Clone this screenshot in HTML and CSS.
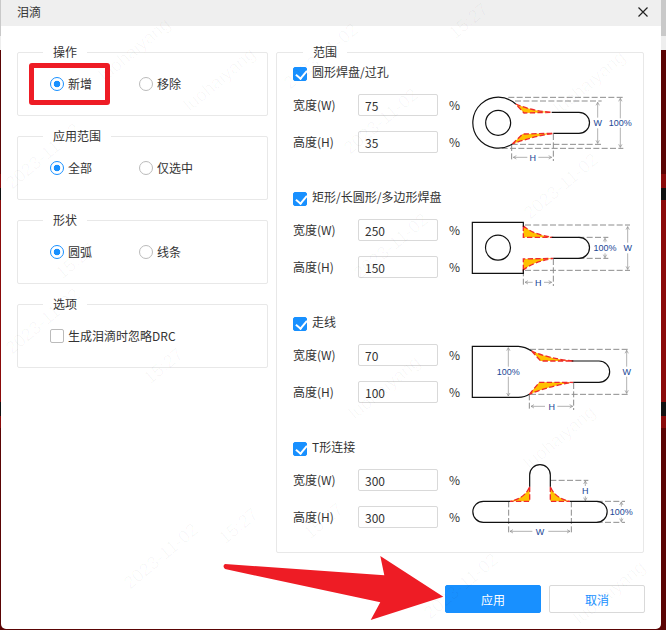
FILE: index.html
```html
<!DOCTYPE html>
<html>
<head>
<title>泪滴</title>
<link rel="stylesheet" href="styles.css">
</head>
<body>

<div class="dialog">
  <div class="title-bar">
    <span>泪滴</span>
    <svg class="close" width="10" height="10" viewBox="0 0 10 10"><path d="M0.5 0.5L9.5 9.5M9.5 0.5L0.5 9.5"/></svg>
  </div>

  <div class="main">
    <div class="left-col">
      <fieldset class="group">
        <legend>操作</legend>
        <div class="options">
          <label class="option"><input type="radio" name="action" checked>新增</label>
          <label class="option"><input type="radio" name="action">移除</label>
        </div>
      </fieldset>
      <fieldset class="group">
        <legend>应用范围</legend>
        <div class="options">
          <label class="option"><input type="radio" name="scope" checked>全部</label>
          <label class="option"><input type="radio" name="scope">仅选中</label>
        </div>
      </fieldset>
      <fieldset class="group">
        <legend>形状</legend>
        <div class="options">
          <label class="option"><input type="radio" name="shape" checked>圆弧</label>
          <label class="option"><input type="radio" name="shape">线条</label>
        </div>
      </fieldset>
      <fieldset class="group">
        <legend>选项</legend>
        <div class="options">
          <label class="option wide"><input type="checkbox">生成泪滴时忽略DRC</label>
        </div>
      </fieldset>
    </div>

    <fieldset class="range">
      <legend>范围</legend>

      <div class="section">
        <div class="fields">
          <label class="check-row"><input type="checkbox" checked>圆形焊盘/过孔</label>
          <div class="field"><span class="field-name">宽度(W)</span><input type="text" value="75"><span class="unit">%</span></div>
          <div class="field"><span class="field-name">高度(H)</span><input type="text" value="35"><span class="unit">%</span></div>
        </div>
        <svg class="diagram" width="170" height="85" viewBox="60 0 510 255">
          <defs>
            <marker id="head" markerUnits="userSpaceOnUse" markerWidth="16" markerHeight="16" refX="13" refY="8" orient="auto">
              <path d="M4 3L13 8L4 13" fill="none" stroke="#8c8c8c" stroke-width="2"/>
            </marker>
          </defs>
          <path class="dash" d="M175 37H520M155 190H520M195 48H455M185 178H455"/>
          <path class="dash" d="M185 180V228M310 147V228"/>
          <path class="dim" d="M443 98V52"/>
          <path class="dim" d="M443 130V175"/>
          <path class="dim" d="M511 100V40"/>
          <path class="dim" d="M511 128V187"/>
          <path class="dim" d="M232 217H190"/>
          <path class="dim" d="M265 217H305"/>
          <path class="drop" d="M197 57Q245 78 305 82L222 84Z"/>
          <path class="drop" d="M187 177L218 147L310 145Q245 155 187 177Z"/>
          <path class="shape" d="M197 57A76.5 76.5 0 1 0 187 177"/>
          <circle class="shape" cx="144.500" cy="113.500" r="37.500"/>
          <path class="shape" d="M305 82H387A31.500 31.500 0 0 1 387 145H310"/>
          <text x="443" y="122">W</text>
          <text x="511" y="122">100%</text>
          <text x="248" y="227">H</text>
        </svg>
      </div>

      <div class="section">
        <div class="fields">
          <label class="check-row"><input type="checkbox" checked>矩形/长圆形/多边形焊盘</label>
          <div class="field"><span class="field-name">宽度(W)</span><input type="text" value="250"><span class="unit">%</span></div>
          <div class="field"><span class="field-name">高度(H)</span><input type="text" value="150"><span class="unit">%</span></div>
        </div>
        <svg class="diagram" width="170" height="85" viewBox="60 0 510 255">
          <path class="dash" d="M225 45H540M225 181H540M385 82H475M385 145H475"/>
          <path class="dash" d="M220 181V228M310 147V228"/>
          <path class="dim" d="M465 97V85"/>
          <path class="dim" d="M465 130V143"/>
          <path class="dim" d="M533 98V50"/>
          <path class="dim" d="M533 130V178"/>
          <path class="dim" d="M248 217H225"/>
          <path class="dim" d="M282 217H305"/>
          <path class="drop" d="M220 47V82H310Q250 75 220 47Z"/>
          <path class="drop" d="M220 180V147L310 145Q250 155 220 180Z"/>
          <path class="shape" d="M220 50V37H67V190H220V178"/>
          <circle class="shape" cx="144" cy="113" r="37.500"/>
          <path class="shape" d="M305 82H387A31.500 31.500 0 0 1 387 145H310"/>
          <text x="465" y="122">100%</text>
          <text x="533" y="122">W</text>
          <text x="265" y="227">H</text>
        </svg>
      </div>

      <div class="section">
        <div class="fields">
          <label class="check-row"><input type="checkbox" checked>走线</label>
          <div class="field"><span class="field-name">宽度(W)</span><input type="text" value="70"><span class="unit">%</span></div>
          <div class="field"><span class="field-name">高度(H)</span><input type="text" value="100"><span class="unit">%</span></div>
        </div>
        <svg class="diagram" width="170" height="85" viewBox="60 0 510 255">
          <path class="dash" d="M240 43H540M240 178H540"/>
          <path class="dash" d="M238 178V225M371 144V225"/>
          <path class="dim" d="M175 95V38"/>
          <path class="dim" d="M175 125V183"/>
          <path class="dim" d="M530 95V46"/>
          <path class="dim" d="M530 125V175"/>
          <path class="dim" d="M285 214H243"/>
          <path class="dim" d="M322 214H368"/>
          <path class="drop" d="M245 48L272 78H370Q300 72 245 48Z"/>
          <path class="drop" d="M238 178L268 142H370Q300 152 238 178Z"/>
          <path class="shape" d="M245 48Q225 35 205 34H67V187H205Q225 187 238 178"/>
          <path class="shape" d="M365 78H447A32 32 0 0 1 447 142H370"/>
          <text x="175" y="120">100%</text>
          <text x="530" y="120">W</text>
          <text x="305" y="224">H</text>
        </svg>
      </div>

      <div class="section last">
        <div class="fields">
          <label class="check-row"><input type="checkbox" checked>T形连接</label>
          <div class="field"><span class="field-name">宽度(W)</span><input type="text" value="300"><span class="unit">%</span></div>
          <div class="field"><span class="field-name">高度(H)</span><input type="text" value="300"><span class="unit">%</span></div>
        </div>
        <svg class="diagram" width="170" height="85" viewBox="60 15 510 255">
          <path class="dash" d="M301 76H415M440 139H525M440 202H525"/>
          <path class="dash" d="M176 139V238M364 139V238"/>
          <path class="dim" d="M406 93V78"/>
          <path class="dim" d="M406 124V137"/>
          <path class="dim" d="M514 155V141"/>
          <path class="dim" d="M514 188V200"/>
          <path class="dim" d="M247 229H180"/>
          <path class="dim" d="M295 229H360"/>
          <path class="drop" d="M239 95V139H180Q225 130 239 95Z"/>
          <path class="drop" d="M301 95V139H360Q315 130 301 95Z"/>
          <path class="shape" d="M239 95V60A31 31 0 0 1 301 60V95"/>
          <path class="shape" d="M360 139H440A31.500 31.500 0 0 1 440 202H100A31.500 31.500 0 0 1 100 139H180"/>
          <text x="406" y="118">H</text>
          <text x="514" y="180">100%</text>
          <text x="270" y="239">W</text>
        </svg>
      </div>
    </fieldset>
  </div>

  <div class="footer">
    <button type="button" class="btn primary">应用</button>
    <button type="button" class="btn">取消</button>
  </div>
</div>

<svg class="watermark" width="666" height="630" viewBox="0 0 666 630">
  <text transform="translate(105 82) rotate(-40)">luohaiyang</text>
  <text transform="translate(190 112) rotate(-40)">luohaiyang</text>
  <text transform="translate(12 190) rotate(-40)">2023-11-02</text>
  <text transform="translate(62 280) rotate(-40)">15:27</text>
  <text transform="translate(12 355) rotate(-40)">2023-11-02</text>
  <text transform="translate(150 385) rotate(-40)">15:27</text>
  <text transform="translate(290 90) rotate(-40)">2023-11-02</text>
  <text transform="translate(455 40) rotate(-40)">15:27</text>
  <text transform="translate(350 155) rotate(-40)">2023-11-02</text>
  <text transform="translate(560 115) rotate(-40)">luohaiyang</text>
  <text transform="translate(360 280) rotate(-40)">2023-11-02</text>
  <text transform="translate(530 220) rotate(-40)">2023-11-02</text>
  <text transform="translate(355 420) rotate(-40)">luohaiyang</text>
  <text transform="translate(130 590) rotate(-40)">2023-11-02</text>
  <text transform="translate(225 545) rotate(-40)">15:27</text>
  <text transform="translate(310 540) rotate(-40)">15:27</text>
  <text transform="translate(530 470) rotate(-40)">luohaiyang</text>
  <text transform="translate(430 620) rotate(-40)">2023-11-02</text>
  <text transform="translate(580 625) rotate(-40)">luohaiyang</text>
</svg>

<div class="mark-box"></div>
<svg class="mark-arrow" width="666" height="630" viewBox="0 0 666 630">
  <path d="M225 564L384.300 575.300L380.300 556L443.300 596.700L370.700 620L380.300 602.300L225 569Q222 566 225 564Z"/>
</svg>

</body>
</html>
```

FILE: styles.css
```css
* {
  box-sizing: border-box;
}

html, body {
  height: 630px;
}

body {
  margin: 0;
  position: relative;
  overflow: hidden;
  font-family: "Noto Sans CJK SC", "Open Sans", sans-serif;
  font-size: 12px;
  color: #333;
  background: linear-gradient(to bottom, #c9c9c9 0, #c9c9c9 36px, #eeeeee 36px, #eeeeee 50px, #5a0404 50px, #5a0404 174px, #8a0a0a 174px, #8a0a0a 188px, #111 188px, #111 200px, #8a0a0a 200px, #8a0a0a 402px, #111 402px, #111 416px, #8a0a0a 416px, #8a0a0a 428px, #5a0404 428px);
}

.dialog {
  width: 660px;
  height: 629px;
  margin-left: 1px;
  background: #fff;
  border-radius: 0 0 5px 5px;
}

.title-bar {
  height: 26px;
  padding: 0 13px 3px 16px;
  background: #efefef;
  display: flex;
  align-items: center;
  justify-content: space-between;
}

.close {
  stroke: #222;
  stroke-width: 1.2;
}

.main {
  display: flex;
  gap: 8px;
  padding: 18px 17px 0 16px;
}

.left-col {
  width: 251px;
  display: flex;
  flex-direction: column;
  gap: 12px;
}

fieldset {
  margin: 0;
  min-width: 0;
  padding: 0;
  border: 1px solid #e8e8e8;
  border-radius: 2px;
}

legend {
  margin-left: 25px;
  padding: 0 10px;
  line-height: 16px;
}

.group {
  height: 72px;
}

.options {
  display: flex;
  padding: 16px 0 0 32px;
}

.option {
  width: 89px;
  height: 16px;
  display: flex;
  align-items: center;
  gap: 4px;
  line-height: 16px;
}

.wide {
  width: auto;
}

input[type="radio"] {
  appearance: none;
  width: 14px;
  height: 14px;
  margin: 0;
  border: 1px solid #bbb;
  border-radius: 50%;
  background: #fff;
}

input[type="radio"]:checked {
  border-color: #1890ff;
  background: radial-gradient(circle, #1890ff 0, #1890ff 3px, #fff 3.6px);
}

input[type="checkbox"] {
  appearance: none;
  flex: none;
  width: 14px;
  height: 14px;
  margin: 0;
  border: 1px solid #bbb;
  border-radius: 2px;
  background: #fff;
  position: relative;
}

input[type="checkbox"]:checked {
  border-color: #1890ff;
  background: #1890ff;
}

input[type="checkbox"]:checked::after {
  content: "";
  position: absolute;
  left: 3.5px;
  top: 0.5px;
  width: 5px;
  height: 9px;
  border: solid #fff;
  border-width: 0 2px 2px 0;
  transform: rotate(40deg);
}

.range {
  width: 368px;
  padding: 5px 0 24px 16px;
}

.range legend {
  margin-left: 10px;
}

.section {
  height: 125px;
  display: flex;
}

.section.last {
  height: 88px;
}

.fields {
  width: 177px;
  flex: none;
}

.check-row {
  height: 16px;
  margin-bottom: 13px;
  display: flex;
  align-items: flex-start;
  gap: 5px;
  white-space: nowrap;
  line-height: 14px;
}

.check-row input[type="checkbox"] {
  margin-top: 1.5px;
}

.field {
  height: 22px;
  margin-bottom: 15px;
  display: flex;
  align-items: center;
}

.field:last-child {
  margin-bottom: 0;
}

.field-name {
  width: 65px;
  padding-bottom: 2px;
}

.unit {
  padding-bottom: 2px;
}

.field input {
  width: 80px;
  height: 22px;
  margin-right: 11px;
  padding: 0 6px;
  border: 1px solid #d9d9d9;
  border-radius: 2px;
  font: inherit;
  color: #333;
}

.diagram {
  flex: none;
  margin-top: 20px;
}

.shape {
  fill: none;
  stroke: #111;
  stroke-width: 3.6;
}

.drop {
  fill: #ffc000;
  stroke: #ee2a2a;
  stroke-width: 4;
  stroke-dasharray: 16 7;
}

.dash {
  fill: none;
  stroke: #8c8c8c;
  stroke-width: 3;
  stroke-dasharray: 18 7;
}

.dim {
  fill: none;
  stroke: #8c8c8c;
  stroke-width: 2;
  marker-end: url(#head);
}

.diagram text {
  font-family: "Liberation Sans", sans-serif;
  font-size: 27px;
  fill: #1a4796;
  text-anchor: middle;
}

.footer {
  display: flex;
  justify-content: flex-end;
  gap: 8px;
  padding: 32px 16px 0 0;
}

.btn {
  width: 96px;
  height: 28px;
  padding: 0;
  border: 1px solid #d9d9d9;
  border-radius: 2px;
  background: #fff;
  color: #1890ff;
  font: inherit;
}

.btn.primary {
  border-color: #1890ff;
  background: #1890ff;
  color: #fff;
}

.watermark {
  position: absolute;
  left: 0;
  top: 0;
  pointer-events: none;
}

.watermark text {
  font-family: "Liberation Sans", sans-serif;
  font-size: 18px;
  fill: rgba(0, 0, 0, 0.03);
}

.mark-box {
  position: absolute;
  left: 29px;
  top: 63px;
  width: 81px;
  height: 42px;
  border: 5px solid #ee1c25;
  border-radius: 3px;
}

.mark-arrow {
  position: absolute;
  left: 0;
  top: 0;
  pointer-events: none;
  fill: #ee1c25;
}
```
